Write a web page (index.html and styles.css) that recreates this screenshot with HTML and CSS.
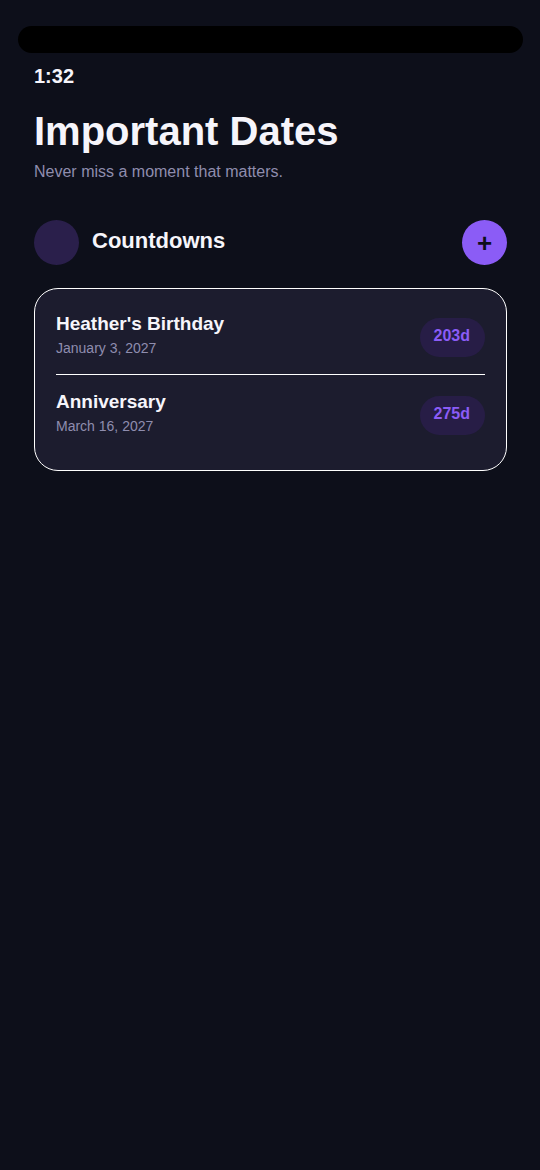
FILE: index.html
```html
<!DOCTYPE html>
<html lang="en">
<head>
    <meta charset="UTF-8">
    <meta name="viewport" content="width=device-width, initial-scale=1.0">
    <title>Important Dates</title>
    <link rel="stylesheet" href="styles.css">
</head>
<body>
    <div class="notch"></div>
    <div class="page">
        <header>
            <div class="time">1:32</div>
            <h1>Important Dates</h1>
            <p class="subtitle">Never miss a moment that matters.</p>
        </header>

        <main>
            <div class="section-header">
                <span class="section-icon"></span>
                <h2>Countdowns</h2>
                <button class="add-btn" type="button" aria-label="Add countdown">+</button>
            </div>

            <ul class="card">
                <li class="date-row">
                    <div class="date-info">
                        <h3>Heather's Birthday</h3>
                        <time datetime="2027-01-03">January 3, 2027</time>
                    </div>
                    <span class="badge">203d</span>
                </li>
                <li class="date-row">
                    <div class="date-info">
                        <h3>Anniversary</h3>
                        <time datetime="2027-03-16">March 16, 2027</time>
                    </div>
                    <span class="badge">275d</span>
                </li>
            </ul>
        </main>
    </div>
</body>
</html>
```

FILE: styles.css
```css
* {
    box-sizing: border-box;
}

body {
    margin: 0;
    padding-top: 26px;
    min-height: 100vh;
    background-color: #0d0f1a;
    color: #f6f5fb;
    font-family: "Liberation Sans", Arial, sans-serif;
}

h1, h2, h3, p, ul {
    margin: 0;
    padding: 0;
}

/* Black bar at the top of the phone */
.notch {
    height: 27px;
    margin: 0 17px 0 18px;
    border-radius: 14px;
    background-color: #000;
}

.page {
    padding: 11px 33px 0 34px;
}

.time {
    font-size: 20px;
    font-weight: bold;
    line-height: 24px;
}

h1 {
    margin-top: 19px;
    font-size: 40px;
    line-height: 48px;
}

.subtitle {
    margin-top: 7px;
    color: #8f8dae;
    font-size: 16px;
    line-height: 20px;
}

/* Section title with the add button */
.section-header {
    display: flex;
    align-items: center;
    gap: 13px;
    margin-top: 38px;
}

.section-icon {
    width: 45px;
    height: 45px;
    border-radius: 50%;
    background-color: #2a1f4b;
}

h2 {
    flex: 1;
    padding-bottom: 4px;
    font-size: 22px;
    line-height: 26px;
}

.add-btn {
    width: 45px;
    height: 45px;
    padding: 2px 0 0;
    border: none;
    border-radius: 50%;
    background-color: #8b5cf6;
    color: #0d0f1a;
    font-family: inherit;
    font-size: 26px;
    font-weight: bold;
    line-height: 43px;
    cursor: pointer;
}

.card {
    margin-top: 23px;
    padding: 8px 21px 18px;
    border: 1px solid #fff;
    border-radius: 24px;
    background-color: #1c1c2e;
    list-style: none;
}

.date-row {
    display: flex;
    align-items: flex-end;
    justify-content: space-between;
    padding: 15px 0 17px;
}

.date-row + .date-row {
    border-top: 1px solid #fff;
}

h3 {
    font-size: 19px;
    line-height: 24px;
}

time {
    display: block;
    margin-top: 3px;
    color: #8f8dae;
    font-size: 14px;
    line-height: 18px;
}

.badge {
    padding: 8px 15px 11px 14px;
    border-radius: 20px;
    background-color: #271d46;
    color: #8b5cf6;
    font-size: 16px;
    font-weight: bold;
    line-height: 20px;
}
```
